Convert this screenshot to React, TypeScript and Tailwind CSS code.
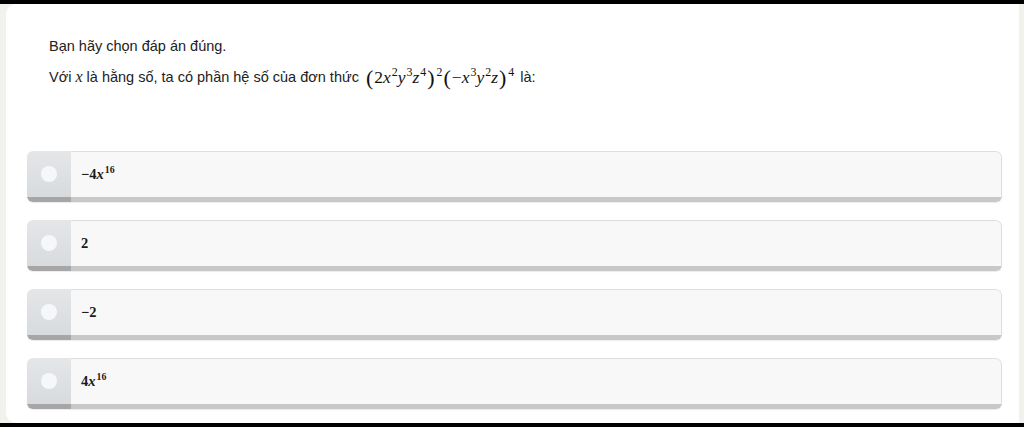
import React from 'react';

const serif = { fontFamily: '"Liberation Serif", "DejaVu Serif", serif' };

function V({ children }: { children: React.ReactNode }) {
  return <i className="italic">{children}</i>;
}

function Sup({ children }: { children: React.ReactNode }) {
  return <sup className="text-[0.68em] not-italic relative -top-[0.55em] align-baseline ml-[1px]">{children}</sup>;
}

function Paren({ children }: { children: React.ReactNode }) {
  return <span className="text-[22px] leading-none align-[-2px] mx-[1px]">{children}</span>;
}

const options: React.ReactNode[] = [
  <>−4<V>x</V><Sup>16</Sup></>,
  <>2</>,
  <>−2</>,
  <>4<V>x</V><Sup>16</Sup></>,
];

function Option({ children }: { children: React.ReactNode }) {
  return (
    <div className="flex h-[51px] rounded-[6px] overflow-hidden shadow-[0_1px_1px_rgba(0,0,0,0.08)]">
      <div className="w-[44px] flex flex-col">
        <div className="flex-1 bg-gradient-to-b from-[#e4e6e8] to-[#d8dbde] flex items-center justify-center">
          <span className="w-[16px] h-[16px] rounded-full bg-[#f6f7f8]" />
        </div>
        <div className="h-[5px] bg-[#a6a6a6]" />
      </div>
      <div className="flex-1 flex flex-col">
        <div className="flex-1 bg-[#f8f8f8] border-t border-r border-[#dedede] rounded-tr-[6px] flex items-center pl-[10px]">
          <span className="text-[14.5px] text-[#1a1a1a] font-bold" style={serif}>
            {children}
          </span>
        </div>
        <div className="h-[5px] bg-[#c8c8c8]" />
      </div>
    </div>
  );
}

export default function App() {
  return (
    <div className="w-[1024px] h-[427px] bg-black pt-[4px] pb-[4px] overflow-hidden">
      <div className="h-full bg-[#f1f2ec] pl-[6px] pr-[5px]">
        <div
          className="h-full bg-white rounded-tl-[10px] rounded-bl-[10px] pt-[32px] pl-[21px] pr-[17px]"
          style={{ fontFamily: '"Liberation Sans", Arial, sans-serif' }}
        >
          <div className="pl-[22px] text-[14.5px] text-[#222]">
            <p className="leading-[20px]">Bạn hãy chọn đáp án đúng.</p>
            <p className="mt-[7px] leading-[28px] flex items-center gap-[6px]">
              <span>
                Với <span className="text-[16px]" style={serif}><V>x</V></span> là hằng số, ta có phần hệ số của đơn thức
              </span>
              <span className="text-[17.5px] text-[#111] whitespace-nowrap" style={serif}>
                <Paren>(</Paren>2<V>x</V><Sup>2</Sup><V>y</V><Sup>3</Sup><V>z</V><Sup>4</Sup><Paren>)</Paren><Sup>2</Sup>
                <Paren>(</Paren>−<V>x</V><Sup>3</Sup><V>y</V><Sup>2</Sup><V>z</V><Paren>)</Paren><Sup>4</Sup>
              </span>
              <span>là:</span>
            </p>
          </div>
          <div className="mt-[60px] flex flex-col gap-[18px]">
            {options.map((o, i) => (
              <Option key={i}>{o}</Option>
            ))}
          </div>
        </div>
      </div>
    </div>
  );
}
